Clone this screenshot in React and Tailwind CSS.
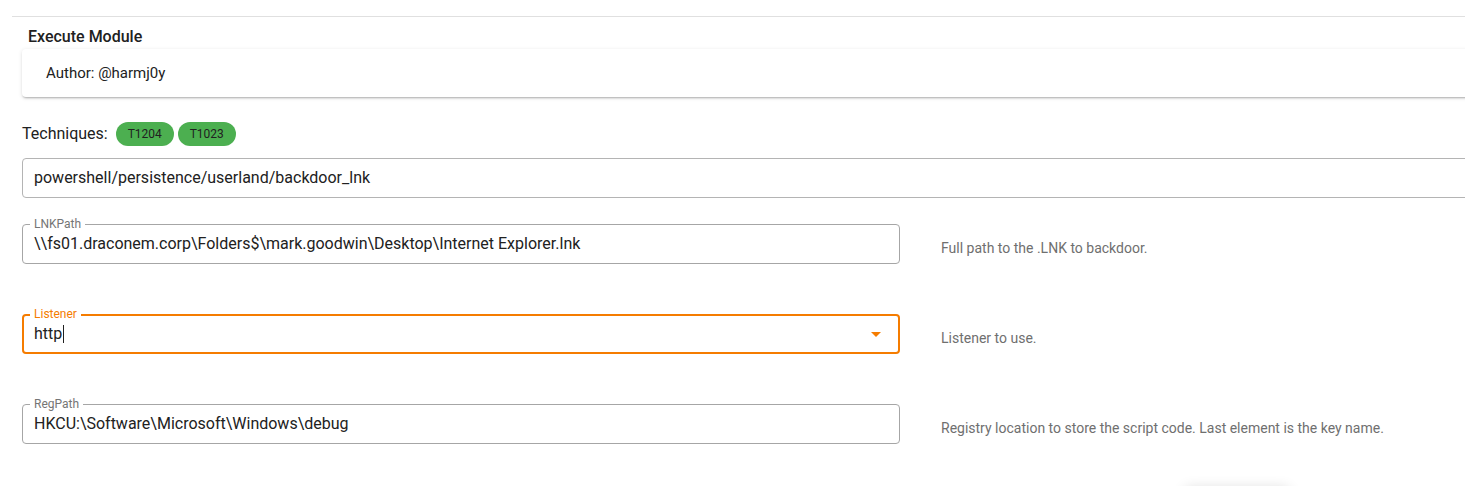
import React from 'react';

const fields = [
  {
    name: 'LNKPath',
    value: '\\\\fs01.draconem.corp\\Folders$\\mark.goodwin\\Desktop\\Internet Explorer.lnk',
    description: 'Full path to the .LNK to backdoor.',
  },
  {
    name: 'Listener',
    value: 'http',
    description: 'Listener to use.',
    select: true,
    focused: true,
  },
  {
    name: 'RegPath',
    value: 'HKCU:\\Software\\Microsoft\\Windows\\debug',
    description: 'Registry location to store the script code. Last element is the key name.',
  },
];

const OutlinedField = ({ field }) => {
  const borderClass = field.focused
    ? 'border-2 border-[#f57c00]'
    : 'border border-[#a6a6a6]';
  const labelClass = field.focused ? 'text-[#f57c00]' : 'text-[#757575]';
  return (
    <div className={`relative h-[40px] w-[878px] rounded-[4px] ${borderClass} flex items-center`}>
      <span
        className={`absolute ${field.focused ? '-top-[9px] left-[6px]' : '-top-[8px] left-[7px]'} bg-white px-[4px] text-[12px] leading-[14px] ${labelClass}`}
      >
        {field.name}
      </span>
      <div className={`flex-1 ${field.focused ? 'pl-[10px]' : 'pl-[11px]'} text-[16px] text-[#212121] flex items-center`}>
        {field.value}
        {field.focused && <span className="ml-px inline-block h-[18px] w-px bg-[#212121]" />}
      </div>
      {field.select && (
        <svg className="mr-[17px]" width="10" height="5" viewBox="0 0 10 5">
          <path d="M0 0h10L5 5z" fill="#f57c00" />
        </svg>
      )}
    </div>
  );
};

export default function App() {
  return (
    <div className="h-[486px] w-[1465px] overflow-hidden bg-white font-['Roboto',_'Liberation_Sans',_sans-serif] text-[#212121]">
      <div className="ml-[12px] mt-[16px] w-[1600px] border-t border-[#e0e0e0] pl-[10px]">
        <h2 className="pl-[6px] pt-[10px] text-[16px] font-medium leading-[20px] text-[#212121]">
          Execute Module
        </h2>
        <div className="mt-[2px] flex h-[48px] items-center rounded-[4px] bg-white pl-[24px] text-[15px] shadow-[0_2px_2px_-1px_rgba(0,0,0,0.25),0_1px_4px_0_rgba(0,0,0,0.12)]">
          Author: @harmj0y
        </div>

        <div className="mt-[25px] flex h-[24px] items-center gap-[4px]">
          <span className="mr-[4px] text-[16px] text-[#212121]">Techniques:</span>
          {['T1204', 'T1023'].map((t) => (
            <span
              key={t}
              className="flex h-[24px] w-[58px] items-center justify-center rounded-full bg-[#4caf50] text-[12px] text-[#212121]"
            >
              {t}
            </span>
          ))}
        </div>

        <div className="mt-[12px] flex h-[40px] items-center rounded-[4px] border border-[#b4b4b4] pl-[11px] text-[16px] text-[#212121]">
          powershell/persistence/userland/backdoor_lnk
        </div>

        <div className="mt-[26px] flex flex-col gap-[50px]">
          {fields.map((f) => (
            <div key={f.name} className="flex items-center gap-[41px]">
              <OutlinedField field={f} />
              <span className="pt-[8px] text-[14px] text-[#6f6f6f]">{f.description}</span>
            </div>
          ))}
        </div>

        <div className="ml-[1163px] mt-[44px] h-[36px] w-[104px] rounded-[4px] bg-white shadow-[0_0_14px_rgba(0,0,0,0.14)]" />
      </div>
    </div>
  );
}
